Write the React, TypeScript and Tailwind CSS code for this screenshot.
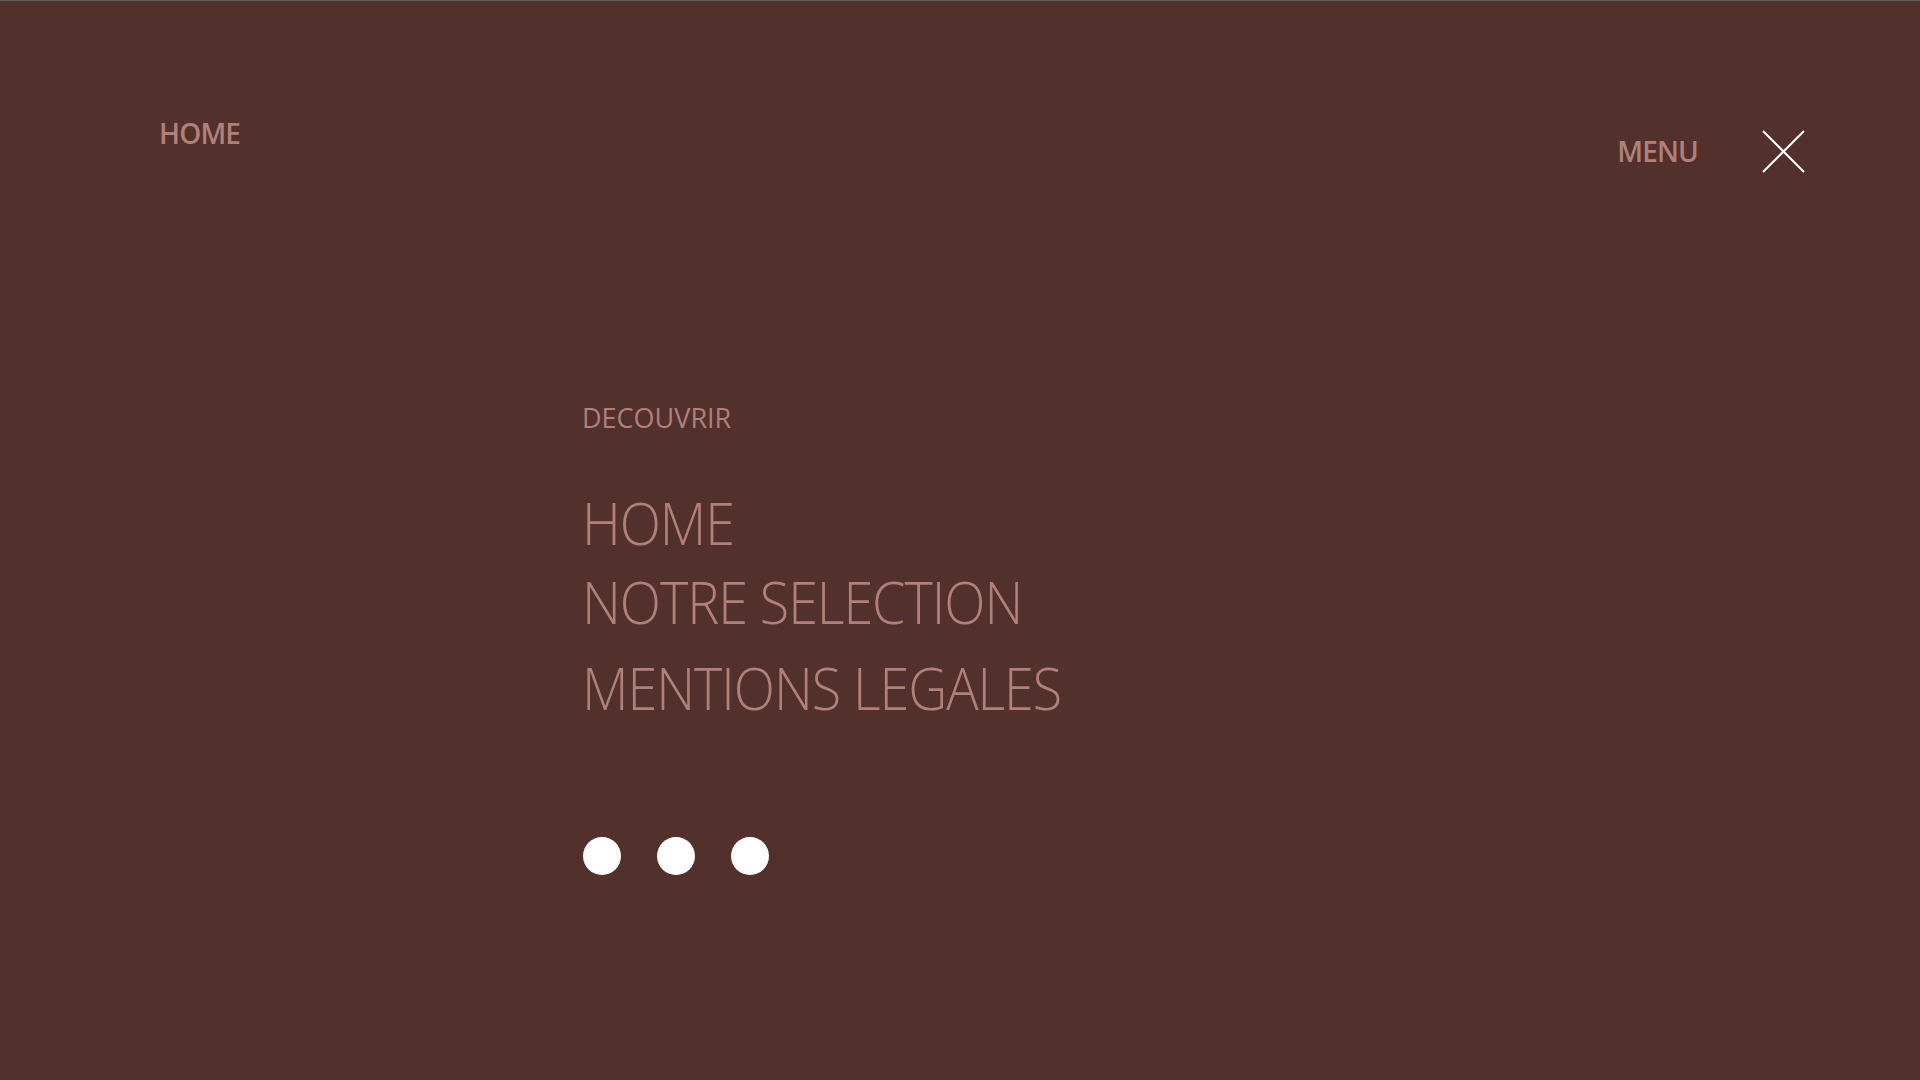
import React from "react";

const TEXT = "text-[#b0807a]";

export default function App() {
  return (
    <div className="min-h-screen w-full bg-[#52302b] border-t border-[#5c5c5c] font-['Open_Sans',sans-serif]">
      <header className="flex items-start justify-between pl-[159px] pr-[115px]">
        <div className={`mt-[118px] text-[28px] leading-none font-semibold tracking-[-0.03em] ${TEXT}`}>HOME</div>
        <div className="mt-[129px] flex items-center gap-[64px]">
          <span className={`-mt-[2px] text-[28px] leading-none font-semibold tracking-[-0.03em] ${TEXT}`}>MENU</span>
          <svg width="43" height="43" viewBox="0 0 43 43" className="block">
            <path d="M1 1 L42 42 M42 1 L1 42" stroke="#ffffff" strokeWidth="2" />
          </svg>
        </div>
      </header>
      <main className="pl-[582px]">
        <div className={`mt-[231px] text-[27px] leading-none ${TEXT}`}>DECOUVRIR</div>
        <nav className={`mt-[63px] flex flex-col items-start text-[58px] leading-none font-light tracking-[-0.02em] ${TEXT}`}>
          <a className="block origin-left scale-x-[0.93]">HOME</a>
          <a className="block mt-[21px] origin-left scale-x-[0.93]">NOTRE SELECTION</a>
          <a className="block mt-[28px] origin-left scale-x-[0.93]">MENTIONS LEGALES</a>
        </nav>
        <div className="mt-[120px] ml-px flex gap-[36px]">
          <span className="block w-[38px] h-[38px] rounded-full bg-white" />
          <span className="block w-[38px] h-[38px] rounded-full bg-white" />
          <span className="block w-[38px] h-[38px] rounded-full bg-white" />
        </div>
      </main>
    </div>
  );
}
